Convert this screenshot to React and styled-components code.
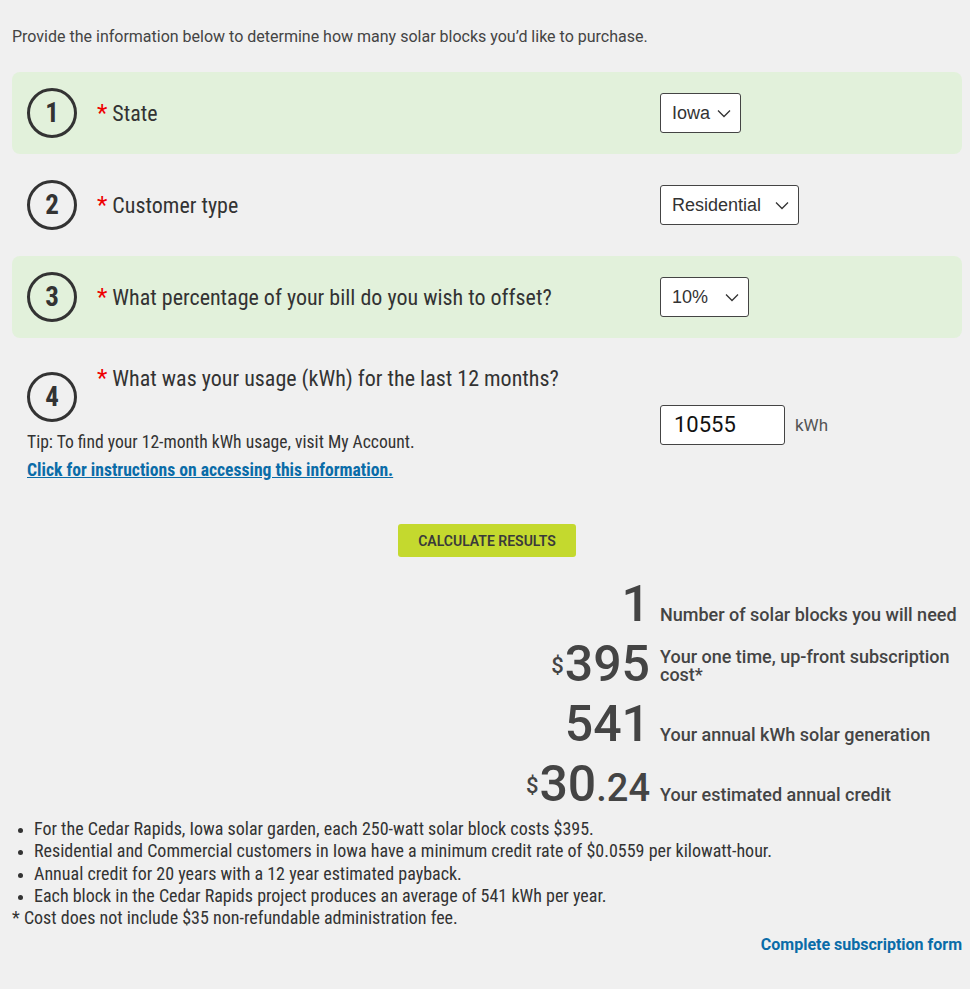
import React from 'react';
import styled, { createGlobalStyle } from 'styled-components';

const GlobalStyle = createGlobalStyle`
  body {
    margin: 0;
    background: #f0f0f0;
    font-family: "Roboto Condensed", Roboto, "Liberation Sans", sans-serif;
    color: #333;
  }
`;

const Page = styled.div`
  padding: 27px 8px 24px 12px;
`;

const Intro = styled.p`
  margin: 0 0 26px;
  font-family: Roboto, sans-serif;
  font-size: 16px;
  color: #444;
`;

const Steps = styled.div`
  display: flex;
  flex-direction: column;
  gap: 10px;
`;

const Step = styled.div`
  display: grid;
  grid-template-columns: 633px 1fr;
  align-items: center;
  min-height: 82px;
  padding: ${p => (p.$tall ? '18px 0 10px 15px' : '0 0 0 15px')};
  box-sizing: border-box;
  border-radius: 8px;
  background: ${p => (p.$shaded ? '#e2f1db' : 'transparent')};
`;

const Question = styled.div`
  display: flex;
  align-items: ${p => (p.$top ? 'flex-start' : 'center')};
  gap: 20px;
`;

const Circle = styled.div`
  flex: none;
  width: 50px;
  height: 50px;
  box-sizing: border-box;
  border: 3px solid #333;
  border-radius: 50%;
  display: flex;
  align-items: center;
  justify-content: center;
  font-size: 27px;
  font-weight: 700;
  color: #333;
  margin-top: ${p => (p.$offset ? '6px' : '0')};
`;

const Label = styled.div`
  font-size: 22px;
  color: #333;
  margin-top: ${p => (p.$raise ? '-2px' : '0')};
`;

const Star = styled.span`
  color: #e00;
  font-size: 24px;
  margin-right: 5px;
`;

const Select = styled.div`
  display: flex;
  align-items: center;
  justify-content: space-between;
  width: ${p => p.$w}px;
  height: 40px;
  box-sizing: border-box;
  padding: 0 9px 0 11px;
  background: #fff;
  border: 1px solid #444;
  border-radius: 3px;
  font-family: "Liberation Sans", Arial, sans-serif;
  font-size: 18px;
  color: #333;
`;

const Chevron = () => (
  <svg width="14" height="9" viewBox="0 0 14 9">
    <polyline points="1,1.5 7,7.5 13,1.5" fill="none" stroke="#333" strokeWidth="1.3" />
  </svg>
);

const Tip = styled.div`
  margin: 10px 0 0;
  font-size: 17.6px;
  color: #333;
`;

const HelpLink = styled.a`
  display: inline-block;
  margin-top: 8px;
  font-size: 17.6px;
  font-weight: 700;
  color: #0a6ca8;
  text-decoration: underline;
`;

const UsageField = styled.div`
  display: flex;
  align-items: center;
  gap: 10px;
  margin-top: 3px;
`;

const Input = styled.div`
  width: 125px;
  height: 40px;
  box-sizing: border-box;
  padding: 0 13px;
  display: flex;
  align-items: center;
  background: #fff;
  border: 1px solid #444;
  border-radius: 3px;
  font-family: Roboto, sans-serif;
  font-size: 22px;
  color: #111;
`;

const Unit = styled.span`
  font-family: Roboto, sans-serif;
  font-size: 17px;
  color: #555;
`;

const ButtonRow = styled.div`
  display: flex;
  justify-content: center;
  margin: 34px 0 19px;
`;

const CalcButton = styled.button`
  width: 178px;
  height: 33px;
  border: none;
  border-radius: 3px;
  background: #c4d92e;
  font-family: Roboto, sans-serif;
  font-size: 14px;
  font-weight: 600;
  color: #3a3a3a;
  text-transform: uppercase;
`;

const Results = styled.div`
  display: grid;
  grid-template-columns: 638px 1fr;
  column-gap: 10px;
  row-gap: 4px;
  font-family: Roboto, sans-serif;
`;

const Figure = styled.div`
  justify-self: end;
  font-size: 50px;
  line-height: 56px;
  font-weight: 500;
  color: #444;
  white-space: nowrap;
`;

const Dollar = styled.span`
  font-size: 22px;
  line-height: 1;
  vertical-align: top;
  position: relative;
  top: 19px;
  margin-right: 1px;
`;

const Cents = styled.span`
  font-size: 38px;
  line-height: 1;
`;

const Caption = styled.div`
  align-self: end;
  padding-bottom: 8px;
  font-size: 18px;
  line-height: 18px;
  font-weight: 500;
  color: #444;
`;

const Notes = styled.ul`
  margin: 6px 0 0;
  padding: 0 0 0 22px;
  font-size: 18px;
  line-height: 22.3px;
  color: #333;

  li::marker {
    font-size: 15px;
  }
`;

const Footnote = styled.div`
  font-size: 18px;
  line-height: 22px;
  color: #333;
`;

const FormLink = styled.a`
  display: block;
  margin-top: 6px;
  text-align: right;
  font-family: Roboto, sans-serif;
  font-size: 16px;
  font-weight: 700;
  color: #0a6ca8;
  text-decoration: none;
`;

export default function App() {
  return (
    <Page>
      <GlobalStyle />
      <Intro>Provide the information below to determine how many solar blocks you’d like to purchase.</Intro>
      <Steps>
        <Step $shaded>
          <Question>
            <Circle>1</Circle>
            <Label><Star>*</Star>State</Label>
          </Question>
          <Select $w={81}>Iowa<Chevron /></Select>
        </Step>
        <Step>
          <Question>
            <Circle>2</Circle>
            <Label><Star>*</Star>Customer type</Label>
          </Question>
          <Select $w={139}>Residential<Chevron /></Select>
        </Step>
        <Step $shaded>
          <Question>
            <Circle>3</Circle>
            <Label><Star>*</Star>What percentage of your bill do you wish to offset?</Label>
          </Question>
          <Select $w={89}>10%<Chevron /></Select>
        </Step>
        <Step $tall>
          <div>
            <Question $top>
              <Circle $offset>4</Circle>
              <Label $raise><Star>*</Star>What was your usage (kWh) for the last 12 months?</Label>
            </Question>
            <Tip>Tip: To find your 12-month kWh usage, visit My Account.</Tip>
            <HelpLink href="#">Click for instructions on accessing this information.</HelpLink>
          </div>
          <UsageField>
            <Input>10555</Input>
            <Unit>kWh</Unit>
          </UsageField>
        </Step>
      </Steps>
      <ButtonRow>
        <CalcButton>Calculate Results</CalcButton>
      </ButtonRow>
      <Results>
        <Figure>1</Figure>
        <Caption>Number of solar blocks you will need</Caption>
        <Figure><Dollar>$</Dollar>395</Figure>
        <Caption>Your one time, up-front subscription cost*</Caption>
        <Figure>541</Figure>
        <Caption>Your annual kWh solar generation</Caption>
        <Figure><Dollar>$</Dollar>30<Cents>.24</Cents></Figure>
        <Caption>Your estimated annual credit</Caption>
      </Results>
      <Notes>
        <li>For the Cedar Rapids, Iowa solar garden, each 250-watt solar block costs $395.</li>
        <li>Residential and Commercial customers in Iowa have a minimum credit rate of $0.0559 per kilowatt-hour.</li>
        <li>Annual credit for 20 years with a 12 year estimated payback.</li>
        <li>Each block in the Cedar Rapids project produces an average of 541 kWh per year.</li>
      </Notes>
      <Footnote>* Cost does not include $35 non-refundable administration fee.</Footnote>
      <FormLink href="#">Complete subscription form</FormLink>
    </Page>
  );
}
